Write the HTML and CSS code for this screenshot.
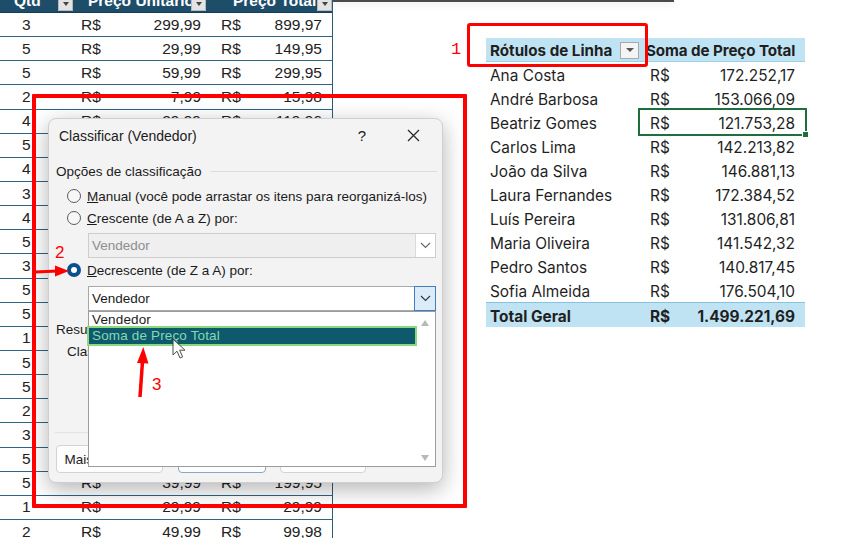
FILE: index.html
```html
<!DOCTYPE html>
<html lang="pt-BR">
<head>
<meta charset="utf-8">
<title>Classificar (Vendedor)</title>
<link rel="stylesheet" href="styles.css">
</head>
<body>
<div class="screen">
  <div class="sheet">
    <div class="sh-head">
      <div class="hc hc-a"><span>Qtd</span><span class="fbtn"><i></i></span></div>
      <div class="hc hc-b"><span>Preço Unitário</span><span class="fbtn"><i></i></span></div>
      <div class="hc hc-c"><span>Preço Total</span><span class="fbtn"><i></i></span></div>
    </div>
    <div class="sh-row"><span class="q">3</span><span class="m mb"><span>R$</span><span>299,99</span></span><span class="m mc"><span>R$</span><span>899,97</span></span></div>
    <div class="sh-row"><span class="q">5</span><span class="m mb"><span>R$</span><span>29,99</span></span><span class="m mc"><span>R$</span><span>149,95</span></span></div>
    <div class="sh-row"><span class="q">5</span><span class="m mb"><span>R$</span><span>59,99</span></span><span class="m mc"><span>R$</span><span>299,95</span></span></div>
    <div class="sh-row"><span class="q">2</span><span class="m mb"><span>R$</span><span>7,99</span></span><span class="m mc"><span>R$</span><span>15,98</span></span></div>
    <div class="sh-row"><span class="q">4</span><span class="m mb"><span>R$</span><span>29,99</span></span><span class="m mc"><span>R$</span><span>119,96</span></span></div>
    <div class="sh-row"><span class="q">5</span><span class="m mb"><span>R$</span><span>19,99</span></span><span class="m mc"><span>R$</span><span>99,95</span></span></div>
    <div class="sh-row"><span class="q">4</span><span class="m mb"><span>R$</span><span>49,99</span></span><span class="m mc"><span>R$</span><span>199,96</span></span></div>
    <div class="sh-row"><span class="q">3</span><span class="m mb"><span>R$</span><span>89,99</span></span><span class="m mc"><span>R$</span><span>269,97</span></span></div>
    <div class="sh-row"><span class="q">4</span><span class="m mb"><span>R$</span><span>15,99</span></span><span class="m mc"><span>R$</span><span>63,96</span></span></div>
    <div class="sh-row"><span class="q">5</span><span class="m mb"><span>R$</span><span>39,99</span></span><span class="m mc"><span>R$</span><span>199,95</span></span></div>
    <div class="sh-row"><span class="q">3</span><span class="m mb"><span>R$</span><span>299,99</span></span><span class="m mc"><span>R$</span><span>899,97</span></span></div>
    <div class="sh-row"><span class="q">5</span><span class="m mb"><span>R$</span><span>7,99</span></span><span class="m mc"><span>R$</span><span>39,95</span></span></div>
    <div class="sh-row"><span class="q">5</span><span class="m mb"><span>R$</span><span>59,99</span></span><span class="m mc"><span>R$</span><span>299,95</span></span></div>
    <div class="sh-row"><span class="q">1</span><span class="m mb"><span>R$</span><span>89,99</span></span><span class="m mc"><span>R$</span><span>89,99</span></span></div>
    <div class="sh-row"><span class="q">5</span><span class="m mb"><span>R$</span><span>29,99</span></span><span class="m mc"><span>R$</span><span>149,95</span></span></div>
    <div class="sh-row"><span class="q">5</span><span class="m mb"><span>R$</span><span>49,99</span></span><span class="m mc"><span>R$</span><span>249,95</span></span></div>
    <div class="sh-row"><span class="q">2</span><span class="m mb"><span>R$</span><span>19,99</span></span><span class="m mc"><span>R$</span><span>39,98</span></span></div>
    <div class="sh-row"><span class="q">3</span><span class="m mb"><span>R$</span><span>15,99</span></span><span class="m mc"><span>R$</span><span>47,97</span></span></div>
    <div class="sh-row"><span class="q">5</span><span class="m mb"><span>R$</span><span>59,99</span></span><span class="m mc"><span>R$</span><span>299,95</span></span></div>
    <div class="sh-row"><span class="q">5</span><span class="m mb"><span>R$</span><span>39,99</span></span><span class="m mc"><span>R$</span><span>199,95</span></span></div>
    <div class="sh-row"><span class="q">1</span><span class="m mb"><span>R$</span><span>29,99</span></span><span class="m mc"><span>R$</span><span>29,99</span></span></div>
    <div class="sh-row"><span class="q">2</span><span class="m mb"><span>R$</span><span>49,99</span></span><span class="m mc"><span>R$</span><span>99,98</span></span></div>
  </div>

  <div class="side">
    <div class="topbar"></div>
    <div class="pivot">
      <div class="pv-head">
        <div class="pv-l">Rótulos de Linha<span class="pbtn"><i></i></span></div>
        <div class="pv-h2">Soma de Preço Total</div>
      </div>
      <div class="pv-row"><div class="pv-l">Ana Costa</div><div class="pv-v"><span>R$</span><span>172.252,17</span></div></div>
      <div class="pv-row"><div class="pv-l">André Barbosa</div><div class="pv-v"><span>R$</span><span>153.066,09</span></div></div>
      <div class="pv-row"><div class="pv-l">Beatriz Gomes</div><div class="pv-v sel"><span>R$</span><span>121.753,28</span></div></div>
      <div class="pv-row"><div class="pv-l">Carlos Lima</div><div class="pv-v"><span>R$</span><span>142.213,82</span></div></div>
      <div class="pv-row"><div class="pv-l">João da Silva</div><div class="pv-v"><span>R$</span><span>146.881,13</span></div></div>
      <div class="pv-row"><div class="pv-l">Laura Fernandes</div><div class="pv-v"><span>R$</span><span>172.384,52</span></div></div>
      <div class="pv-row"><div class="pv-l">Luís Pereira</div><div class="pv-v"><span>R$</span><span>131.806,81</span></div></div>
      <div class="pv-row"><div class="pv-l">Maria Oliveira</div><div class="pv-v"><span>R$</span><span>141.542,32</span></div></div>
      <div class="pv-row"><div class="pv-l">Pedro Santos</div><div class="pv-v"><span>R$</span><span>140.817,45</span></div></div>
      <div class="pv-row"><div class="pv-l">Sofia Almeida</div><div class="pv-v"><span>R$</span><span>176.504,10</span></div></div>
      <div class="pv-row pv-total"><div class="pv-l">Total Geral</div><div class="pv-v"><span>R$</span><span>1.499.221,69</span></div></div>
    </div>
  </div>

  <div class="dlg">
    <div class="dlg-title">
      <span class="t">Classificar (Vendedor)</span>
      <span class="help">?</span>
      <span class="close"><svg width="13" height="13" viewBox="0 0 13 13"><path d="M1 1L12 12M12 1L1 12" stroke="#2b2b2b" stroke-width="1.3" fill="none"/></svg></span>
    </div>
    <div class="dlg-body">
      <div class="group">Opções de classificação</div>
      <div class="opt"><span class="radio"></span><span><u>M</u>anual (você pode arrastar os itens para reorganizá-los)</span></div>
      <div class="opt"><span class="radio"></span><span><u>C</u>rescente (de A a Z) por:</span></div>
      <div class="combo dis"><span class="ctext">Vendedor</span><span class="cbtn"><svg width="11" height="7" viewBox="0 0 11 7"><path d="M1 1L5.5 5.5L10 1" stroke="#6a6a6a" stroke-width="1.2" fill="none"/></svg></span></div>
      <div class="opt opt3"><span class="radio on"></span><span><u>D</u>ecrescente (de Z a A) por:</span></div>
      <div class="combo act"><span class="ctext">Vendedor</span><span class="cbtn"><svg width="11" height="7" viewBox="0 0 11 7"><path d="M1 1L5.5 5.5L10 1" stroke="#3a3a3a" stroke-width="1.2" fill="none"/></svg></span></div>
      <div class="resumo">Resumo</div>
      <div class="clas">Classificar</div>
    </div>
    <div class="dlg-foot">
      <span class="btn b-more">Mais Opções...</span>
      <span class="btn b-ok">OK</span>
      <span class="btn b-cancel">Cancelar</span>
    </div>
  </div>

  <div class="listbox">
    <div class="litems">
      <div class="li">Vendedor</div>
      <div class="li hl">Soma de Preço Total</div>
    </div>
    <div class="lscroll"><i class="up"></i><i class="down"></i></div>
  </div>

  <div class="ann ann-box1"></div>
  <div class="ann ann-box2"></div>
  <span class="ann-num n1">1</span>
  <span class="ann-num n2">2</span>
  <span class="ann-num n3">3</span>
  <svg class="arrows" width="847" height="538" viewBox="0 0 847 538">
    <path d="M35 272L58 271" stroke="#ff0000" stroke-width="3.2" fill="none"/>
    <path d="M55 265.5L69 271L55 276.5Z" fill="#ff0000"/>
    <path d="M140 397L142.6 360" stroke="#ff0000" stroke-width="3.5" fill="none"/>
    <path d="M137 363L143.3 347L148.5 363.5Z" fill="#ff0000"/>
  </svg>
  <svg class="cursor" width="16" height="22" viewBox="0 0 16 22">
    <path d="M1 1L1 17L5 13.2L8 20L10.6 18.9L7.7 12.2L13 12.2Z" fill="#ffffff" stroke="#3a3a3a" stroke-width="1" stroke-linejoin="round"/>
  </svg>
</div>
</body>
</html>
```

FILE: styles.css
```css
body {
  margin: 0;
  background: #ffffff;
}

.screen {
  position: relative;
  width: 847px;
  height: 538px;
  overflow: hidden;
  display: flex;
  background: #ffffff;
}

/* ---------- left worksheet table ---------- */
.sheet {
  width: 332px;
  flex: none;
  border-right: 1px solid #2a5b77;
  overflow: hidden;
  font-family: "Liberation Sans", Arial, sans-serif;
  font-size: 15.5px;
  color: #222222;
}

.sh-head {
  display: grid;
  grid-template-columns: 74px 133px 125px;
  height: 24px;
  margin-top: -11px;
  background: #1e4d69;
  color: #ffffff;
  font-weight: bold;
  border-bottom: 1px solid #163d55;
  box-sizing: border-box;
}

.hc {
  display: flex;
  align-items: center;
  justify-content: space-between;
  overflow: hidden;
  white-space: nowrap;
}
.hc-a { padding-left: 14px; padding-right: 1px; }
.hc-b { padding-left: 14px; padding-right: 1px; }
.hc-c { padding-left: 26px; padding-right: 0; }
.hc-b span:first-child, .hc-c span:first-child { overflow: hidden; }

.fbtn {
  flex: none;
  width: 15px;
  height: 17px;
  align-self: flex-end;
  margin-bottom: 1px;
  background: #e3e3e3;
  border: 1px solid #b9b9b9;
  box-sizing: border-box;
  display: flex;
  align-items: flex-end;
  justify-content: center;
  padding-bottom: 4px;
}
.fbtn i {
  width: 0;
  height: 0;
  border-left: 3.5px solid transparent;
  border-right: 3.5px solid transparent;
  border-top: 4px solid #444444;
}

.sh-row {
  display: grid;
  grid-template-columns: 74px 133px 125px;
  height: 24.15px;
  box-sizing: border-box;
  border-bottom: 1px solid #2f6484;
  align-items: center;
  white-space: nowrap;
}
.q { padding-left: 22px; }
.m { display: flex; justify-content: space-between; }
.mb { padding: 0 6px 0 7px; }
.mc { padding: 0 10px 0 14px; }

/* ---------- right side ---------- */
.side {
  flex: 1;
  min-width: 0;
}
.topbar {
  width: 341px;
  height: 2px;
  background: #4b4b4b;
  box-shadow: 0 2px 7px rgba(0, 0, 0, 0.14);
}

.pivot {
  margin: 36px 0 0 153px;
  width: 319px;
  font-family: "Inter", "Noto Sans", sans-serif;
  font-size: 15.4px;
  color: #1f1f1f;
}
.pv-head {
  display: grid;
  grid-template-columns: 154px 165px;
  height: 24px;
  background: #c0e3f4;
  border-bottom: 1px solid #9ccfe8;
  box-sizing: border-box;
  font-weight: 700;
  font-size: 15.2px;
  align-items: center;
  white-space: nowrap;
  padding-top: 1px;
}
.pv-head .pv-l {
  display: flex;
  align-items: center;
  padding-left: 4px;
}
.pbtn {
  margin-left: auto;
  margin-right: 1px;
  width: 19px;
  height: 17px;
  box-sizing: border-box;
  border: 1px solid #a9a9a9;
  background: #f4f4f4;
  display: flex;
  align-items: center;
  justify-content: center;
}
.pbtn i {
  width: 0;
  height: 0;
  border-left: 4px solid transparent;
  border-right: 4px solid transparent;
  border-top: 4px solid #555555;
}
.pv-h2 {
  padding-left: 6px;
  letter-spacing: -0.1px;
}

.pv-row {
  display: grid;
  grid-template-columns: 154px 165px;
  height: 24px;
  align-items: stretch;
  white-space: nowrap;
}
.pv-row .pv-l {
  padding: 2px 0 0 4px;
  display: flex;
  align-items: center;
}
.pv-v {
  display: flex;
  align-items: center;
  justify-content: space-between;
  padding: 2px 10px 0 10px;
  position: relative;
}
.pv-v.sel {
  outline: 2px solid #1f6e3d;
  outline-offset: 0px;
}
.pv-v.sel::after {
  content: "";
  position: absolute;
  right: -4px;
  bottom: -4px;
  width: 5px;
  height: 5px;
  background: #1f6e3d;
  border: 1px solid #ffffff;
}
.pv-total {
  background: #c0e3f4;
  border-top: 1px solid #86c3e1;
  font-weight: 700;
}

/* ---------- dialog ---------- */
.dlg {
  position: absolute;
  left: 48px;
  top: 118px;
  width: 395px;
  height: 365px;
  box-sizing: border-box;
  border: 1px solid #cfcfcf;
  border-radius: 8px;
  background: #f3f3f3;
  box-shadow: 0 6px 22px rgba(0, 0, 0, 0.30);
  display: flex;
  flex-direction: column;
  font-family: "Liberation Sans", Arial, sans-serif;
  font-size: 13.5px;
  color: #1b1b1b;
}
.dlg-title {
  height: 33px;
  flex: none;
  display: flex;
  align-items: center;
  padding-left: 10px;
}
.dlg-title .t {
  flex: 1;
  font-size: 14px;
}
.help {
  width: 46px;
  text-align: center;
  font-size: 15px;
}
.close {
  width: 57px;
  display: flex;
  justify-content: center;
  align-items: center;
}

.dlg-body {
  flex: 1;
  padding: 0 5px 0 7px;
}
.group {
  display: flex;
  align-items: center;
  gap: 8px;
  height: 18px;
  margin-top: 10px;
  white-space: nowrap;
}
.group::after {
  content: "";
  flex: 1;
  height: 1px;
  background: #dcdcdc;
}
.opt {
  display: flex;
  align-items: center;
  gap: 6px;
  height: 22px;
  padding-left: 11px;
  white-space: nowrap;
}
.group + .opt { margin-top: 5px; }
.opt3 { margin-top: 1px; }
.radio {
  width: 14px;
  height: 14px;
  flex: none;
  box-sizing: border-box;
  border: 1px solid #5c5c5c;
  border-radius: 50%;
  background: #f7f7f7;
}
.radio.on {
  border: none;
  background: #0b4f8c;
  display: flex;
  align-items: center;
  justify-content: center;
}
.radio.on::after {
  content: "";
  width: 6px;
  height: 6px;
  border-radius: 50%;
  background: #ffffff;
}

.combo {
  margin-left: 32px;
  width: 348px;
  height: 25px;
  box-sizing: border-box;
  display: flex;
  align-items: stretch;
  border: 1px solid #c6c6c6;
}
.combo.dis {
  margin-top: 4px;
  background: #efefef;
  color: #8e8e8e;
  border-color: #cdcdcd;
}
.combo.act {
  margin-top: 5px;
  background: #ffffff;
  border-color: #a8a8a8;
}
.ctext {
  flex: 1;
  padding-left: 3px;
  display: flex;
  align-items: center;
}
.cbtn {
  width: 19px;
  flex: none;
  display: flex;
  align-items: center;
  justify-content: center;
  background: #ffffff;
  border-left: 1px solid #dadada;
}
.combo.act .cbtn {
  background: #dcebf8;
  border: 1px solid #3d7fbf;
  margin: -1px -1px -1px 0;
  width: 20px;
}
.resumo {
  margin-top: 10px;
  height: 18px;
  line-height: 18px;
}
.clas {
  margin-top: 4px;
  padding-left: 11px;
  height: 18px;
  line-height: 18px;
}

.dlg-foot {
  flex: none;
  height: 50px;
  box-sizing: border-box;
  margin: 0 6px;
  border-top: 1px solid #e2e2e2;
  padding: 12px 1px 9px;
  display: flex;
  gap: 15px;
}
.btn {
  height: 28px;
  box-sizing: border-box;
  border: 1px solid #d3d3d3;
  border-radius: 4px;
  background: #fdfdfd;
  display: flex;
  align-items: center;
  justify-content: center;
}
.b-more { width: 107px; }
.b-ok { width: 88px; border-color: #84a9c9; }
.b-cancel { width: 86px; margin-left: -1px; }

/* ---------- dropdown list ---------- */
.listbox {
  position: absolute;
  left: 88px;
  top: 311px;
  width: 348px;
  height: 156px;
  box-sizing: border-box;
  border: 1px solid #9c9c9c;
  background: #ffffff;
  display: flex;
  font-family: "Liberation Sans", Arial, sans-serif;
  font-size: 13.5px;
  color: #1b1b1b;
}
.litems {
  flex: 1;
  min-width: 0;
}
.li {
  height: 16px;
  line-height: 16px;
  padding-left: 3px;
  white-space: nowrap;
  letter-spacing: 0.15px;
}
.li.hl {
  background: #0e596b;
  color: #83d9b4;
  box-shadow: 0 0 0 2px #8bd97c;
  position: relative;
}
.lscroll {
  width: 20px;
  flex: none;
  display: flex;
  flex-direction: column;
  align-items: center;
  justify-content: space-between;
  padding: 8px 0 5px;
}
.lscroll .up {
  width: 0;
  height: 0;
  border-left: 4.5px solid transparent;
  border-right: 4.5px solid transparent;
  border-bottom: 6px solid #b8b8b8;
}
.lscroll .down {
  width: 0;
  height: 0;
  border-left: 4.5px solid transparent;
  border-right: 4.5px solid transparent;
  border-top: 6px solid #b8b8b8;
}

/* ---------- annotations ---------- */
.ann {
  position: absolute;
  box-sizing: border-box;
  border: 3.5px solid #ff0000;
  border-radius: 3px;
}
.ann-box1 {
  left: 467px;
  top: 23px;
  width: 181px;
  height: 44px;
}
.ann-box2 {
  left: 32px;
  top: 94px;
  width: 435px;
  height: 414px;
  border-width: 4px;
  border-radius: 1px;
}
.ann-num {
  position: absolute;
  color: #ff0000;
  font-size: 17px;
  line-height: 20px;
}
.n1 {
  left: 451px;
  top: 40px;
  font-family: "Liberation Mono", monospace;
}
.n2 {
  left: 55px;
  top: 243px;
  font-family: "Liberation Sans", Arial, sans-serif;
}
.n3 {
  left: 152px;
  top: 375px;
  font-family: "Liberation Sans", Arial, sans-serif;
}
.arrows {
  position: absolute;
  left: 0;
  top: 0;
}
.cursor {
  position: absolute;
  left: 172px;
  top: 338px;
  opacity: 0.9;
}
```
